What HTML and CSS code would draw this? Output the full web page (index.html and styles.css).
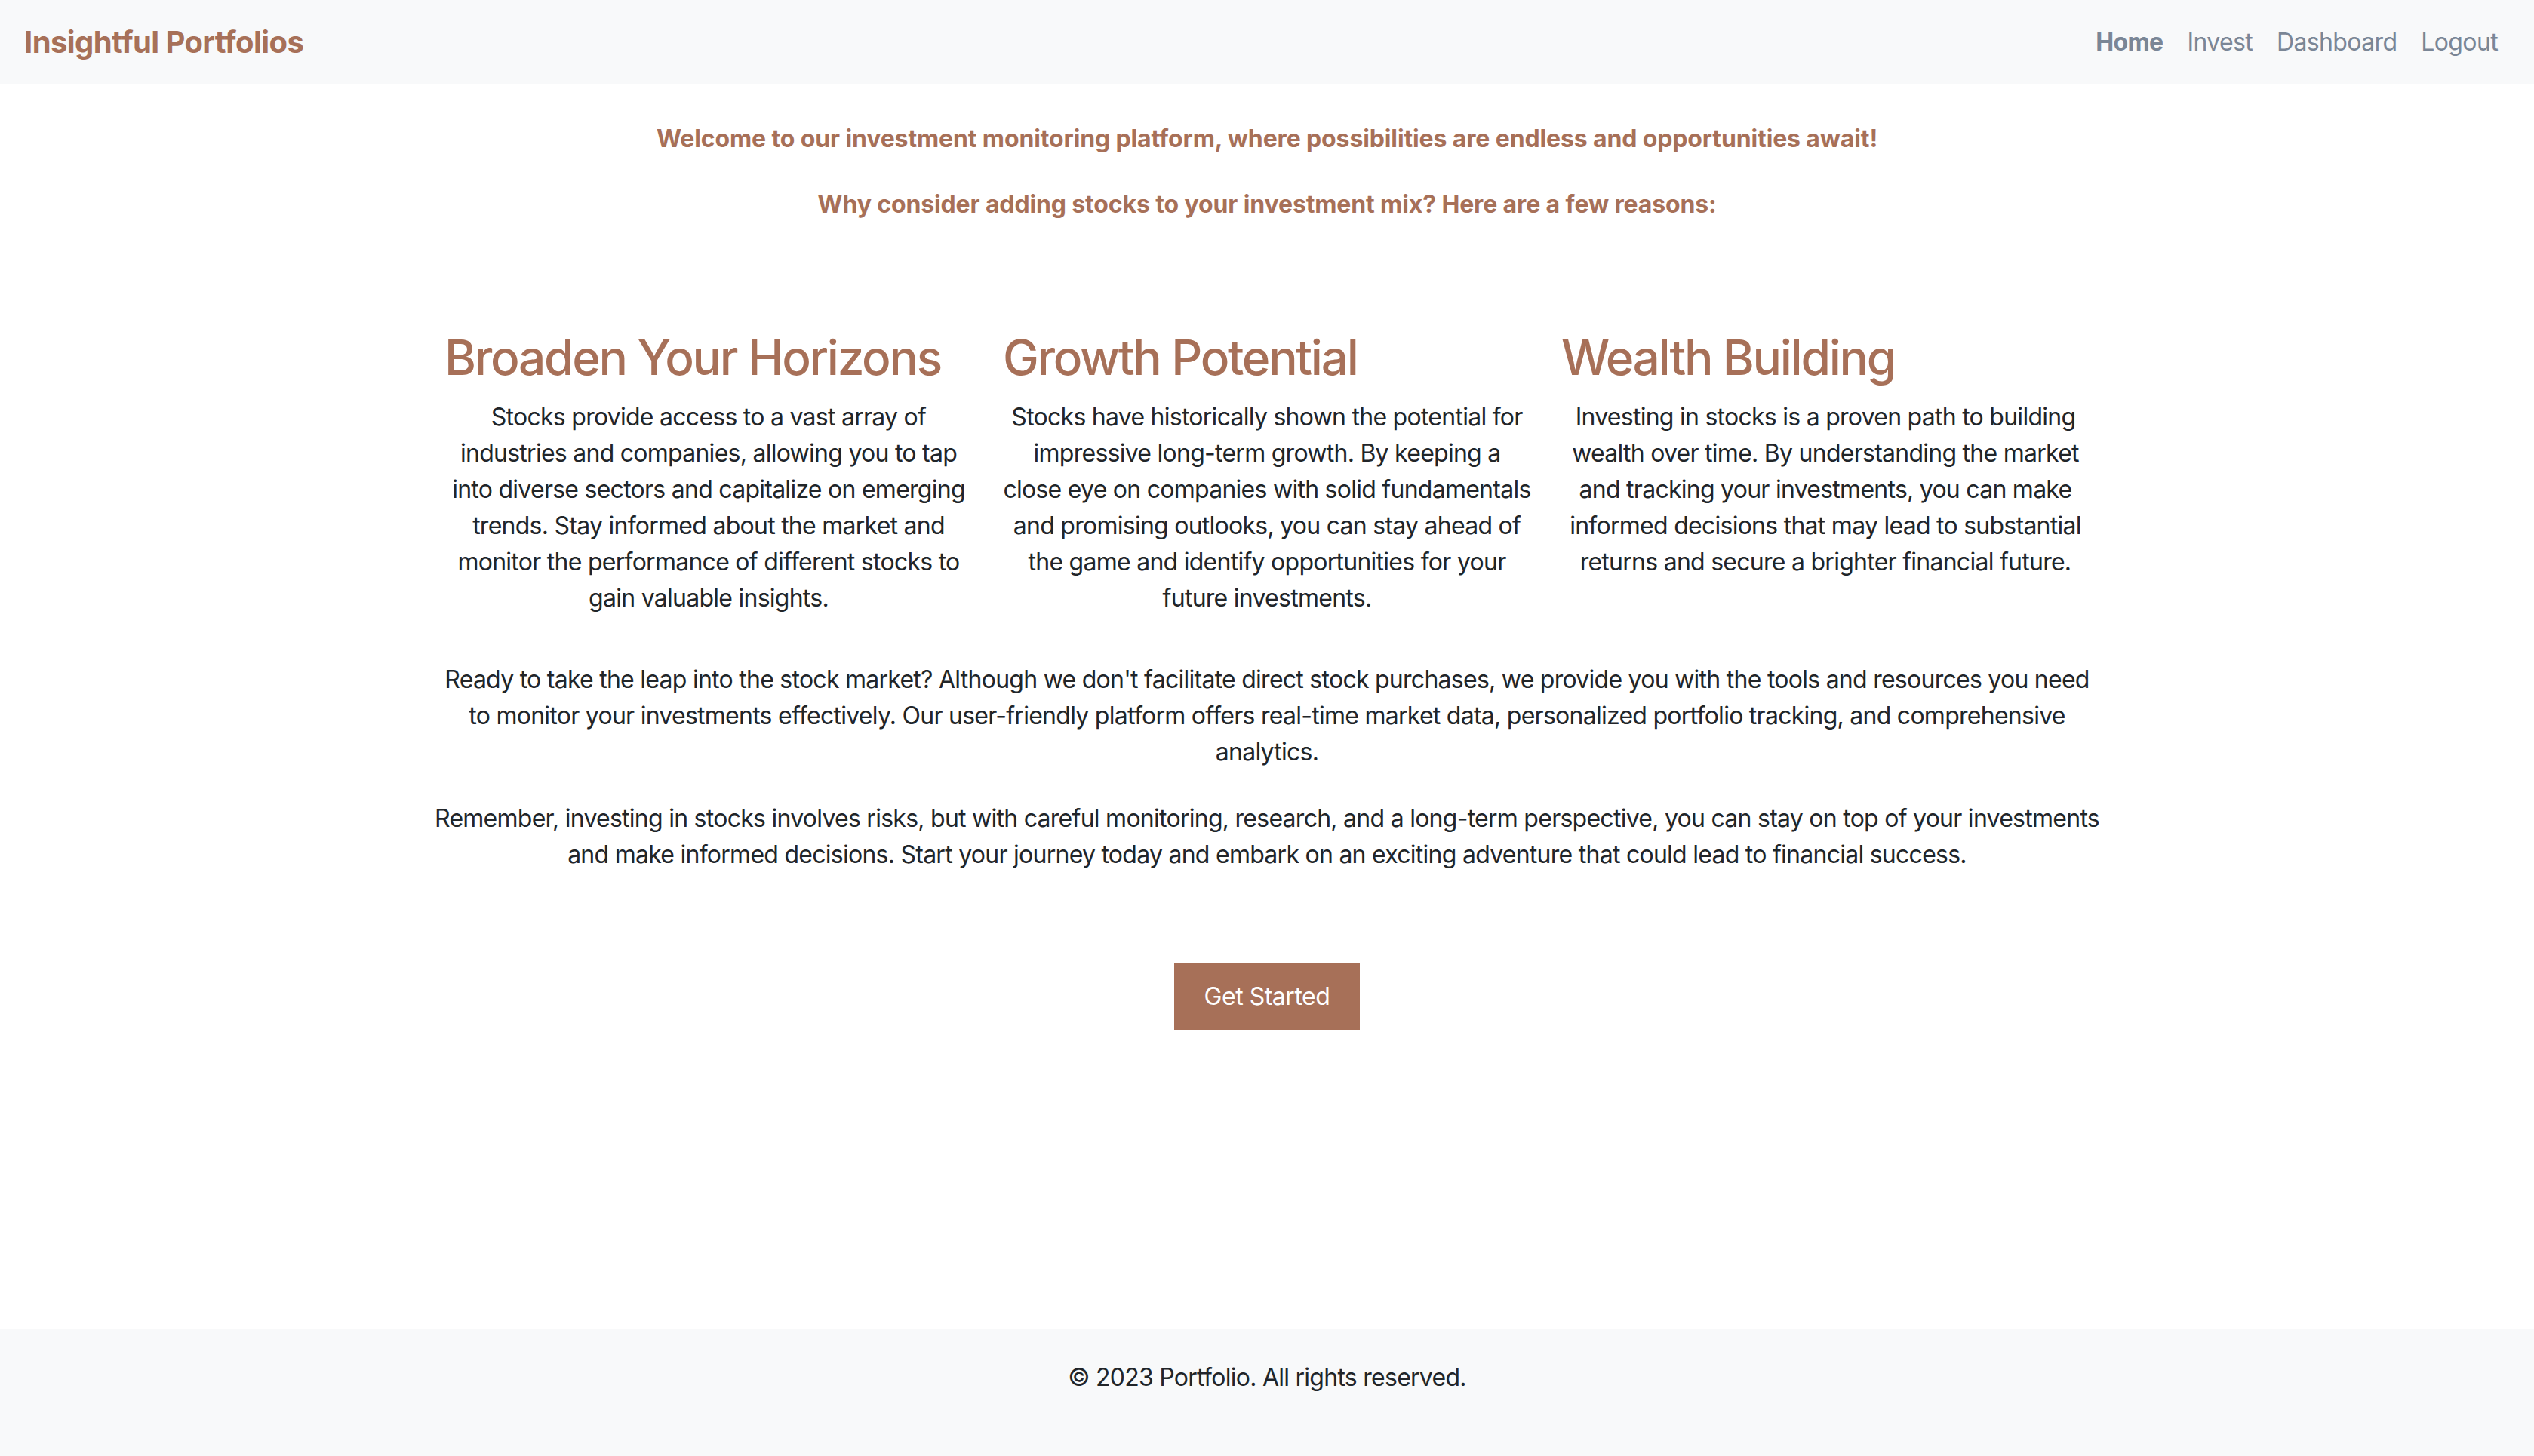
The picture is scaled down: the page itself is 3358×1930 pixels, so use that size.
FILE: index.html
```html
<!DOCTYPE html>
<html lang="en">
<head>
<meta charset="utf-8">
<title>Insightful Portfolios</title>
<link rel="stylesheet" href="styles.css">
</head>
<body>
<nav class="navbar">
  <a class="brand" href="#">Insightful Portfolios</a>
  <ul class="nav-links">
    <li><a class="nav-link active" href="#">Home</a></li>
    <li><a class="nav-link" href="#">Invest</a></li>
    <li><a class="nav-link" href="#">Dashboard</a></li>
    <li><a class="nav-link" href="#">Logout</a></li>
  </ul>
</nav>
<main class="container">
  <p class="intro">Welcome to our investment monitoring platform, where possibilities are endless and opportunities await!</p>
  <p class="intro intro-sub">Why consider adding stocks to your investment mix? Here are a few reasons:</p>
  <div class="features">
    <div class="feature">
      <h2>Broaden Your Horizons</h2>
      <p>Stocks provide access to a vast array of industries and companies, allowing you to tap into diverse sectors and capitalize on emerging trends. Stay informed about the market and monitor the performance of different stocks to gain valuable insights.</p>
    </div>
    <div class="feature">
      <h2>Growth Potential</h2>
      <p>Stocks have historically shown the potential for impressive long-term growth. By keeping a close eye on companies with solid fundamentals and promising outlooks, you can stay ahead of the game and identify opportunities for your future investments.</p>
    </div>
    <div class="feature">
      <h2>Wealth Building</h2>
      <p>Investing in stocks is a proven path to building wealth over time. By understanding the market and tracking your investments, you can make informed decisions that may lead to substantial returns and secure a brighter financial future.</p>
    </div>
  </div>
  <p class="body-text">Ready to take the leap into the stock market? Although we don't facilitate direct stock purchases, we provide you with the tools and resources you need to monitor your investments effectively. Our user-friendly platform offers real-time market data, personalized portfolio tracking, and comprehensive analytics.</p>
  <p class="body-text body-last">Remember, investing in stocks involves risks, but with careful monitoring, research, and a long-term perspective, you can stay on top of your investments and make informed decisions. Start your journey today and embark on an exciting adventure that could lead to financial success.</p>
  <div class="cta">
    <a class="btn" href="#">Get Started</a>
  </div>
</main>
<footer class="footer">
  <p>&copy; 2023 Portfolio. All rights reserved.</p>
</footer>
</body>
</html>
```
FILE: styles.css
```css
* { box-sizing: border-box; }

html, body {
  margin: 0;
  padding: 0;
}

body {
  min-height: 100vh;
  display: flex;
  flex-direction: column;
  font-family: Inter, "Noto Sans", "Liberation Sans", sans-serif;
  font-size: 32px;
  line-height: 48px;
  color: #212529;
  background: #ffffff;
  letter-spacing: -0.023em;
}

a { text-decoration: none; }

.navbar {
  height: 112px;
  background: #f8f9fa;
  display: flex;
  align-items: center;
  justify-content: space-between;
  padding: 0 32px;
}

.brand {
  font-size: 40px;
  font-weight: 700;
  color: #a77058;
  letter-spacing: -0.015em;
}

.nav-links {
  list-style: none;
  margin: 0;
  padding: 0;
  display: flex;
}

.nav-link {
  display: block;
  padding: 0 16px;
  color: #7a8696;
  font-size: 32px;
  letter-spacing: -0.02em;
}

.nav-link.active {
  font-weight: 700;
}

.container {
  flex: 1;
  width: 2220px;
  margin: 0 auto;
  padding-top: 48px;
  text-align: center;
}

.intro {
  margin: 0 0 39px;
  font-weight: 700;
  color: #a77058;
  letter-spacing: -0.004em;
}

.intro-sub {
  margin-bottom: 141px;
}

.features {
  display: grid;
  grid-template-columns: repeat(3, 1fr);
  margin-bottom: 60px;
}

.feature {
  padding: 0 20px;
}

.feature h2 {
  margin: 0 0 16px;
  font-size: 64px;
  font-weight: 500;
  line-height: 1.2;
  color: #a77058;
  text-align: left;
  letter-spacing: -0.036em;
}

.feature p {
  margin: 0;
}

.body-text {
  margin: 0 5px 40px;
}

.body-last {
  margin-bottom: 120px;
}

.cta {
  display: flex;
  justify-content: center;
}

.btn {
  display: inline-block;
  padding: 20px 40px;
  background: #a77058;
  color: #ffffff;
  font-size: 32px;
  line-height: 48px;
  letter-spacing: -0.015em;
}

.footer {
  height: 168px;
  background: #f8f9fa;
  padding-top: 40px;
  text-align: center;
}

.footer p {
  margin: 0;
}
```
